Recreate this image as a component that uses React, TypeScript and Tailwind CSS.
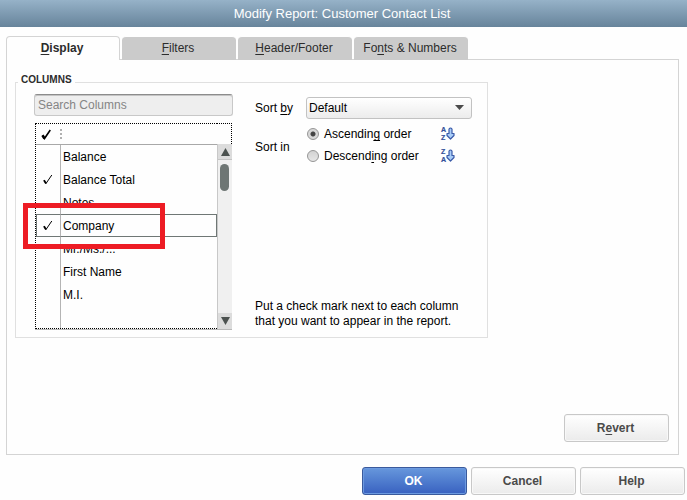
import React, { useRef, useState } from 'react';

interface Column {
  name: string;
  checked: boolean;
}

const INITIAL_COLUMNS: Column[] = [
  { name: 'Balance', checked: false },
  { name: 'Balance Total', checked: true },
  { name: 'Notes', checked: false },
  { name: 'Company', checked: true },
  { name: 'Mr./Ms./...', checked: false },
  { name: 'First Name', checked: false },
  { name: 'M.I.', checked: false },
];

const TABS = [
  { id: 'display', label: <><u>D</u>isplay</> },
  { id: 'filters', label: <><u>F</u>ilters</> },
  { id: 'header', label: <><u>H</u>eader/Footer</> },
  { id: 'fonts', label: <>Fo<u>n</u>ts &amp; Numbers</> },
];

const CheckMark: React.FC<{ className?: string; bold?: boolean }> = ({ className, bold }) => (
  <svg viewBox="0 0 10 11" className={className} fill="none" stroke="#000" aria-hidden="true">
    <path d="M1 6.5 L3 9.5 L8.8 1" strokeWidth={bold ? 1.6 : 1} />
    <path d="M1 6.3 L3 9.5" strokeWidth={bold ? 2.6 : 1.8} />
  </svg>
);

const SortIcon: React.FC<{ top: string; bottom: string }> = ({ top, bottom }) => (
  <svg viewBox="0 0 15 14" className="h-[14px] w-[15px]" aria-hidden="true">
    <g fill="#34509a" stroke="#34509a" strokeWidth="0.2" fontFamily="Liberation Sans, sans-serif" fontWeight="bold" fontSize="7">
      <text x="1" y="5">{top}</text>
      <text x="1" y="13">{bottom}</text>
    </g>
    <path
      d="M9 2 Q10.5 0 12 2 V6.5 H14 V8.500 L10.500 12 L7 8.500 V6.5 H9 Z"
      fill="#a9cdf8"
      stroke="#3a5aa8"
      strokeWidth="1.2"
      strokeLinejoin="round"
    />
  </svg>
);

interface DialogButtonProps {
  primary?: boolean;
  onClick?: () => void;
  children: React.ReactNode;
}

const DialogButton: React.FC<DialogButtonProps> = ({ primary, onClick, children }) => (
  <button
    type="button"
    onClick={onClick}
    className={
      primary
        ? 'h-7 w-[105px] rounded-[3px] border border-[#3a5a9c] bg-linear-to-b from-[#6797dc] to-[#3961c0] pr-[2px] text-[12px] font-bold text-white shadow-[inset_0_0_0_1px_#6c9ae0]'
        : 'h-7 w-[105px] rounded-[3px] border border-[#c8c8c8] bg-linear-to-b from-white to-[#ebebeb] pr-[2px] text-[12px] font-bold text-[#4a4a4a] shadow-[inset_0_0_0_1px_#f8f8f8]'
    }
  >
    {children}
  </button>
);

const ColumnList: React.FC<{ columns: Column[]; onToggle: (name: string) => void }> = ({ columns, onToggle }) => {
  const listRef = useRef<HTMLDivElement>(null);

  const scroll = (amount: number) => {
    listRef.current?.scrollBy({ top: amount });
  };

  return (
    <div className="relative ml-px mt-[7px] flex w-[197px] border-b border-b-[#b8b8b8]">
      <div ref={listRef} className="h-[206px] flex-1 overflow-hidden border-y border-l border-dotted border-black">
        <table className="w-full table-fixed border-separate border-spacing-0 text-left">
          <thead>
            <tr className="h-[21px]">
              <th className="w-[25px] border-b border-[#a8a8a8] p-0 pl-[5px]">
                <CheckMark bold className="h-[11px] w-[11px]" />
              </th>
              <th className="border-b border-[#a8a8a8] p-0">
                <div className="-ml-px h-[10px] border-l-2 border-dotted border-[#b0b0b0]" />
              </th>
            </tr>
          </thead>
          <tbody>
            {columns.map((column) => {
              const frame = column.name === 'Company' ? 'border-y border-y-[#6f7775]' : '';
              return (
                <tr key={column.name} className="h-[23px]">
                  <td className={`border-r border-r-[#b4b4b4] p-0 ${frame ? 'border-l border-l-[#6f7775] pl-[6px]' : 'pl-[7px]'} ${frame}`}>
                    <label className="relative block h-[11px] w-[10px]">
                      <input
                        id={`col-${column.name}`}
                        type="checkbox"
                        checked={column.checked}
                        onChange={() => onToggle(column.name)}
                        aria-label={column.name}
                        className="peer absolute inset-0 appearance-none"
                      />
                      <CheckMark className="invisible h-[11px] w-[10px] peer-checked:visible" />
                    </label>
                  </td>
                  <td className={`p-0 pl-[2px] pt-[2px] leading-[15px] ${frame} ${frame && 'border-r border-r-[#6f7775]'}`}>
                    <label htmlFor={`col-${column.name}`}>{column.name}</label>
                  </td>
                </tr>
              );
            })}
            <tr className="h-[22px]">
              <td className="border-r border-r-[#b4b4b4] p-0" />
              <td className="p-0" />
            </tr>
          </tbody>
        </table>
      </div>
      <div className="flex w-[15px] flex-col">
        <div className="h-[21px] border-r border-t border-dotted border-black" />
        <div className="flex flex-1 flex-col border-l border-[#c8c8c8] bg-[#f0f0f0]">
          <button
            type="button"
            aria-label="Scroll up"
            onClick={() => scroll(-23)}
            className="flex h-4 items-center justify-center border-b border-[#c4c4c4] bg-[#dcdcdc]"
          >
            <svg viewBox="0 0 9 8" className="h-2 w-[9px]" fill="#4c5250"><path d="M4.500 0 L9 8 H0 Z" /></svg>
          </button>
          <div className="flex-1 px-[2px] pt-1">
            <div className="h-[27px] w-[9px] rounded-full bg-[#6e7674]" />
          </div>
          <button
            type="button"
            aria-label="Scroll down"
            onClick={() => scroll(23)}
            className="flex h-4 items-center justify-center bg-[#dcdcdc]"
          >
            <svg viewBox="0 0 9 8" className="h-2 w-[9px]" fill="#4c5250"><path d="M4.500 8 L9 0 H0 Z" /></svg>
          </button>
        </div>
      </div>
      {/* highlight around the Company row */}
      <div className="pointer-events-none absolute -left-3 top-20 h-[46px] w-[142px] border-5 border-[#ed1c24]" />
    </div>
  );
};

const RADIO_CLASS =
  'h-3 w-3 shrink-0 appearance-none rounded-full border border-[#959595] bg-linear-to-b from-[#d2d2d2] to-[#e6e6e6] checked:bg-[radial-gradient(circle,#444_0_2px,#d8d8d8_3px)]';

export default function App() {
  const [activeTab, setActiveTab] = useState('display');
  const [columns, setColumns] = useState(INITIAL_COLUMNS);
  const [order, setOrder] = useState('asc');

  const toggleColumn = (name: string) => {
    setColumns(columns.map((c) => (c.name === name ? { ...c, checked: !c.checked } : c)));
  };

  const handleRevert = () => {
    setColumns(INITIAL_COLUMNS);
    setOrder('asc');
  };

  return (
    <div className="flex min-h-screen flex-col bg-[#fefefe] font-['Liberation_Sans',Arial,sans-serif] text-[12px] text-black [&_u]:underline-offset-2">
      <header className="flex h-[27px] items-center justify-center bg-linear-to-b from-[#96b2c8] to-[#67849b] pr-[3px] pt-px">
        <h1 className="text-[13px] text-white">Modify Report: Customer Contact List</h1>
      </header>

      <div role="tablist" className="relative ml-[6px] mt-[9px] flex items-end gap-[2px]">
        {TABS.map((tab) => (
          <button
            key={tab.id}
            type="button"
            role="tab"
            aria-selected={activeTab === tab.id}
            onClick={() => setActiveTab(tab.id)}
            className={
              activeTab === tab.id
                ? 'h-6 w-[114px] rounded-t-[4px] border border-b-0 border-[#d4d4d4] bg-[#fefefe] pb-[2px] pr-[2px] font-bold text-[#2c2c2c]'
                : 'h-6 w-[114px] rounded-t-[4px] border-t border-[#fefefe] bg-[#cbcbcb] pb-[2px] pr-[2px] text-[#2c2c2c]'
            }
          >
            {tab.label}
          </button>
        ))}
      </div>

      <main className="-mt-px ml-[6px] mr-2 flex flex-1 flex-col border border-[#d4d4d4] px-2 pb-3 pt-[14px]">
        <fieldset className="flex w-fit gap-[22px] border border-[#e0e0e0] pb-[7px] pl-[18px] pr-[15px] pt-1">
          <legend className="-ml-4 px-[3px] pb-1 text-[10px] font-bold leading-3 text-[#2c2c2c]">COLUMNS</legend>
          <div>
            <input
              type="text"
              placeholder="Search Columns"
              aria-label="Search Columns"
              className="block h-[22px] w-[199px] rounded-[3px] border border-[#c8c8c8] border-t-[#8c8c8c] bg-[#eeeeee] px-[3px] shadow-[inset_0_1px_0_#c4c4c4] outline-none placeholder:text-[#858585]"
            />
            <ColumnList columns={columns} onToggle={toggleColumn} />
          </div>

          <div className="flex w-[217px] flex-col pt-[3px]">
            <div className="flex items-center">
              <label htmlFor="sort-by" className="w-[51px]">Sort <u>b</u>y</label>
              <div className="relative flex-1">
                <select
                  id="sort-by"
                  className="block h-[22px] w-full appearance-none rounded-[3px] border border-[#c2c2c2] bg-linear-to-b from-white to-[#ececec] px-[2px] outline-none"
                >
                  <option>Default</option>
                </select>
                <svg viewBox="0 0 9 5" className="pointer-events-none absolute right-2 top-2 h-[5px] w-[9px]" fill="#4a4a4a">
                  <path d="M0 0 H9 L4.500 5 Z" />
                </svg>
              </div>
            </div>
            <div role="radiogroup" aria-label="Sort in" className="mt-1 flex items-center">
              <span className="w-[52px] pt-1">Sort in</span>
              <div className="flex flex-1 flex-col">
                <div className="flex h-[22px] items-center justify-between pr-[17px]">
                  <label className="flex items-center gap-[5px]">
                    <input type="radio" name="order" checked={order === 'asc'} onChange={() => setOrder('asc')} className={RADIO_CLASS} />
                    <span>Ascendin<u>g</u> order</span>
                  </label>
                  <SortIcon top="A" bottom="Z" />
                </div>
                <div className="flex h-[22px] items-center justify-between pr-[17px]">
                  <label className="flex items-center gap-[5px]">
                    <input type="radio" name="order" checked={order === 'desc'} onChange={() => setOrder('desc')} className={RADIO_CLASS} />
                    <span>Descend<u>i</u>ng order</span>
                  </label>
                  <SortIcon top="Z" bottom="A" />
                </div>
              </div>
            </div>
            <p className="mt-auto whitespace-nowrap pb-px leading-[15px]">
              Put a check mark next to each column
              <br />
              that you want to appear in the report.
            </p>
          </div>
        </fieldset>

        <div className="mt-auto flex justify-end pr-px">
          <DialogButton onClick={handleRevert}>R<u>e</u>vert</DialogButton>
        </div>
      </main>

      <footer className="flex justify-end gap-1 pb-[5px] pr-[2px] pt-3">
        <DialogButton primary>OK</DialogButton>
        <DialogButton>Cancel</DialogButton>
        <DialogButton>Help</DialogButton>
      </footer>
    </div>
  );
}
